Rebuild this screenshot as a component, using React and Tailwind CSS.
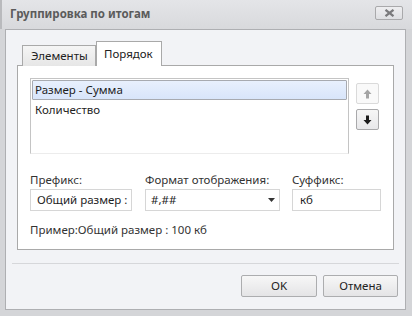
import React from "react";

export default function App() {
  return (
    <div
      className="w-[412px] h-[316px] bg-[#d4d5d8] flex flex-col overflow-hidden text-[11.5px] text-[#1e1e1e]"
      style={{ fontFamily: '"Noto Sans", "Open Sans", sans-serif' }}
    >
      {/* title bar */}
      <div className="h-[29px] flex items-center pl-[8px] pr-[9px] bg-gradient-to-b from-[#e4e5e8] to-[#d8d9dc] border-l-[2px] border-[#b9babd]">
        <div className="font-bold text-[#5b5b5b] text-[11.5px] flex-1 leading-none mt-[-2px]">Группировка по итогам</div>
        <div className="w-[28px] h-[14px] mb-[3px] border border-[#a9a9ab] rounded-[2px] bg-gradient-to-b from-[#eeeef0] to-[#dedfe2] flex items-center justify-center">
          <svg width="11" height="8" viewBox="0 0 11 8">
            <path d="M1.5 0.8 L9.5 7.2 M9.5 0.8 L1.5 7.2" stroke="#7a7a7c" strokeWidth="2.2" />
          </svg>
        </div>
      </div>
      {/* client */}
      <div className="ml-[5px] w-[401px] h-[281px] border border-[#aeafb2] bg-[#f2f3f6] flex flex-col">
        {/* tabs */}
        <div className="pl-[16px] mt-[11px] flex items-end h-[25px] relative z-10">
          <div className="w-[74px] h-[21px] border border-[#a9a9a9] border-b-0 bg-gradient-to-b from-[#f5f5f5] to-[#e6e6e6] flex items-center pl-[8px] text-[#222]">
            Элементы
          </div>
          <div className="w-[66px] h-[25px] border border-[#a9a9a9] border-b-0 bg-white flex items-center pl-[7px] text-[#222] pb-[1px]">
            Порядок
          </div>
        </div>
        <div className="ml-[11px] mt-[-1px] w-[377px] h-[185px] border border-[#a9a9a9] bg-white flex flex-col px-[12px]">
          <div className="flex mt-[12px]">
            <div className="w-[319px] h-[76px] border border-[#c4c4c4] border-b-[#ececec] p-[1px] flex flex-col">
              <div className="h-[20px] border border-[#a7aab0] rounded-[1px] bg-gradient-to-b from-[#e8f0fd] to-[#d8e5fa] flex items-center pl-[2px]">
                Размер - Сумма
              </div>
              <div className="h-[20px] flex items-center pl-[3px]">Количество</div>
            </div>
            <div className="flex flex-col ml-[7px] mt-[5px] gap-[5px]">
              <div className="w-[23px] h-[21px] border border-[#dadada] rounded-[2px] bg-[#f9f9f9] flex items-center justify-center">
                <svg width="9" height="10" viewBox="0 0 9 10">
                  <path d="M4.5 0.5 L8.5 5 L6 5 L6 9.5 L3 9.5 L3 5 L0.5 5 Z" fill="#a4a4a4" />
                </svg>
              </div>
              <div className="w-[23px] h-[21px] border border-[#a9a9ab] rounded-[2px] bg-gradient-to-b from-[#f6f6f6] to-[#e8e8ea] flex items-center justify-center">
                <svg width="9" height="10" viewBox="0 0 9 10">
                  <path d="M4.5 9.5 L8.5 5 L6 5 L6 0.5 L3 0.5 L3 5 L0.5 5 Z" fill="#1c1c1c" />
                </svg>
              </div>
            </div>
          </div>
          <div className="flex mt-[18px] text-[#333]">
            <div className="flex flex-col w-[102px]">
              <div className="h-[16px] leading-[16px] mb-[1px]">Префикс:</div>
              <div className="h-[22px] border border-[#d6d6d6] flex items-center pl-[6px] text-[#1e1e1e] whitespace-nowrap overflow-hidden">
                Общий размер :
              </div>
            </div>
            <div className="flex flex-col w-[135px] ml-[13px]">
              <div className="h-[16px] leading-[16px] mb-[1px] whitespace-nowrap">Формат отображения:</div>
              <div className="h-[22px] border border-[#d6d6d6] flex items-center pl-[5px] pr-[4px] text-[#1e1e1e]">
                <span className="flex-1">#,##</span>
                <svg width="7" height="4" viewBox="0 0 7 4">
                  <path d="M0 0 L7 0 L3.5 4 Z" fill="#333" />
                </svg>
              </div>
            </div>
            <div className="flex flex-col w-[89px] ml-[12px]">
              <div className="h-[16px] leading-[16px] mb-[1px]">Суффикс:</div>
              <div className="h-[22px] border border-[#d6d6d6] flex items-center pl-[7px] text-[#1e1e1e]">кб</div>
            </div>
          </div>
          <div className="mt-[11px] h-[16px] leading-[16px] text-[#333]">Пример:Общий размер : 100 кб</div>
        </div>
        <div className="mt-[13px] mx-[6px] h-[1px] bg-[#d6d7da]" />
        <div className="flex justify-end mt-[11px] pr-[7px] gap-[6px]">
          <div className="w-[76px] h-[22px] border border-[#acadaf] rounded-[2px] bg-gradient-to-b from-[#f7f7f7] to-[#e4e4e6] flex items-center justify-center text-[#222]">
            OK
          </div>
          <div className="w-[75px] h-[22px] border border-[#acadaf] rounded-[2px] bg-gradient-to-b from-[#f7f7f7] to-[#e4e4e6] flex items-center justify-center text-[#222]">
            Отмена
          </div>
        </div>
      </div>
    </div>
  );
}
